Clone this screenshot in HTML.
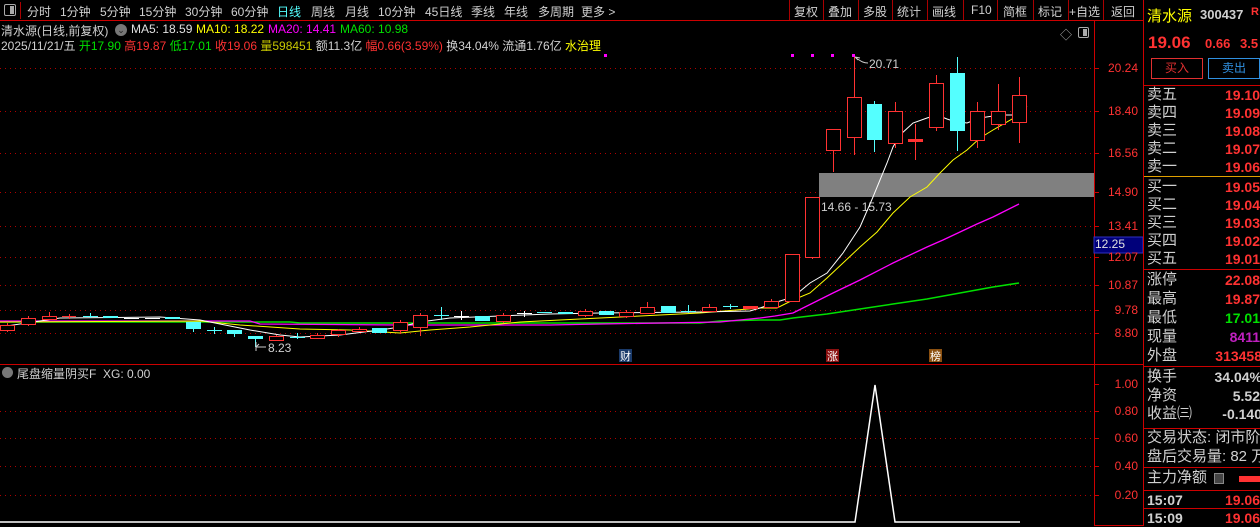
<!DOCTYPE html>
<html><head><meta charset="utf-8"><style>
*{margin:0;padding:0;box-sizing:border-box}
body{width:1260px;height:526px;background:#000;overflow:hidden;position:relative;font-family:"Liberation Sans","Noto Sans CJK SC",sans-serif;color:#c8c8c8}
.a{position:absolute;white-space:nowrap}
.tb{font-size:12px;top:3px;color:#d0d0d0}
.r{color:#ff3232}.g{color:#00e000}.y{color:#ffff00}.m{color:#ff00ff}.w{color:#e0e0e0}.c{color:#54ffff}
.lbl{font-size:15px;color:#d0d0d0;left:1147px;line-height:18px}
.val{font-size:14px;font-weight:bold;right:0;line-height:18px;text-align:right}
</style></head><body>
<!-- toolbar -->
<div class="a" style="left:4px;top:4px;width:12px;height:12px;border:1px solid #aaa;border-radius:2px"><div style="position:absolute;right:1px;top:1px;width:4px;height:8px;background:#aaa"></div></div>
<div class="a" style="left:20px;top:2px;width:1px;height:17px;background:#a00"></div>
<div class="a tb" style="left:27px">分时</div>
<div class="a tb" style="left:60px">1分钟</div>
<div class="a tb" style="left:100px">5分钟</div>
<div class="a tb" style="left:139px">15分钟</div>
<div class="a tb" style="left:185px">30分钟</div>
<div class="a tb" style="left:231px">60分钟</div>
<div class="a tb c" style="left:277px">日线</div>
<div class="a tb" style="left:311px">周线</div>
<div class="a tb" style="left:345px">月线</div>
<div class="a tb" style="left:378px">10分钟</div>
<div class="a tb" style="left:425px">45日线</div>
<div class="a tb" style="left:471px">季线</div>
<div class="a tb" style="left:504px">年线</div>
<div class="a tb" style="left:538px">多周期</div>
<div class="a tb" style="left:581px">更多 &gt;</div>
<div class="a tb" style="left:794px">复权</div>
<div class="a tb" style="left:828px">叠加</div>
<div class="a tb" style="left:863px">多股</div>
<div class="a tb" style="left:897px">统计</div>
<div class="a tb" style="left:932px">画线</div>
<div class="a tb" style="left:971px">F10</div>
<div class="a tb" style="left:1003px">简框</div>
<div class="a tb" style="left:1038px">标记</div>
<div class="a tb" style="left:1069px">+自选</div>
<div class="a tb" style="left:1111px">返回</div>
<div class="a" style="left:789px;top:0;width:1px;height:20px;background:#a00"></div>
<div class="a" style="left:823px;top:0;width:1px;height:20px;background:#a00"></div>
<div class="a" style="left:858px;top:0;width:1px;height:20px;background:#a00"></div>
<div class="a" style="left:892px;top:0;width:1px;height:20px;background:#a00"></div>
<div class="a" style="left:927px;top:0;width:1px;height:20px;background:#a00"></div>
<div class="a" style="left:963px;top:0;width:1px;height:20px;background:#a00"></div>
<div class="a" style="left:997px;top:0;width:1px;height:20px;background:#a00"></div>
<div class="a" style="left:1033px;top:0;width:1px;height:20px;background:#a00"></div>
<div class="a" style="left:1068px;top:0;width:1px;height:20px;background:#a00"></div>
<div class="a" style="left:1103px;top:0;width:1px;height:20px;background:#a00"></div>
<div class="a" style="left:0;top:20px;width:1143px;height:1px;background:#c00"></div>
<div class="a" style="left:1143px;top:0;width:1px;height:526px;background:#c00"></div>
<div class="a" style="left:1094px;top:20px;width:1px;height:506px;background:#c00"></div>
<!-- info rows -->
<div class="a" style="left:1px;top:22px;font-size:12px;color:#d0d0d0">清水源(日线,前复权)</div>
<div class="a" style="left:115px;top:24px;width:12px;height:12px;border-radius:50%;background:#777;color:#222;font-size:9px;text-align:center;line-height:12px">⌄</div>
<div class="a w" style="left:131px;top:22px;font-size:12px">MA5: 18.59</div>
<div class="a y" style="left:196px;top:22px;font-size:12px">MA10: 18.22</div>
<div class="a m" style="left:268px;top:22px;font-size:12px">MA20: 14.41</div>
<div class="a g" style="left:340px;top:22px;font-size:12px">MA60: 10.98</div>
<div class="a" style="left:1px;top:37px;font-size:12px;color:#d0d0d0">2025/11/21/五 <span class="g">开17.90</span> <span class="r">高19.87</span> <span class="g">低17.01</span> <span class="r">收19.06</span> <span style="color:#c8c800">量598451</span> 额11.3亿 <span class="r">幅0.66(3.59%)</span> 换34.04% 流通1.76亿 <span class="y">水治理</span></div>
<div class="a" style="left:1060px;top:26px;font-size:12px;color:#aaa">◇</div>
<div class="a" style="left:1078px;top:27px;width:11px;height:11px;border:1px solid #aaa;border-radius:2px"><div style="position:absolute;right:1px;top:1px;width:4px;height:7px;background:#aaa"></div></div>
<!-- chart svg -->
<svg class="a" style="left:0;top:0" width="1143" height="526">
<g stroke="#b00000" stroke-dasharray="1,4" stroke-width="1">
<line x1="0" x2="1094" y1="68.5" y2="68.5"/><line x1="0" x2="1094" y1="111.5" y2="111.5"/><line x1="0" x2="1094" y1="153.5" y2="153.5"/><line x1="0" x2="1094" y1="192.5" y2="192.5"/><line x1="0" x2="1094" y1="226.5" y2="226.5"/><line x1="0" x2="1094" y1="257.5" y2="257.5"/><line x1="0" x2="1094" y1="285.5" y2="285.5"/><line x1="0" x2="1094" y1="310.5" y2="310.5"/><line x1="0" x2="1094" y1="333.5" y2="333.5"/>
<line x1="0" x2="1094" y1="411.5" y2="411.5"/><line x1="0" x2="1094" y1="438.5" y2="438.5"/><line x1="0" x2="1094" y1="466.5" y2="466.5"/><line x1="0" x2="1094" y1="495.5" y2="495.5"/>
</g>
<g stroke="#c00" stroke-width="1">
<line x1="1094" x2="1099" y1="68.5" y2="68.5"/><line x1="1094" x2="1099" y1="111.5" y2="111.5"/><line x1="1094" x2="1099" y1="153.5" y2="153.5"/><line x1="1094" x2="1099" y1="192.5" y2="192.5"/><line x1="1094" x2="1099" y1="226.5" y2="226.5"/><line x1="1094" x2="1099" y1="257.5" y2="257.5"/><line x1="1094" x2="1099" y1="285.5" y2="285.5"/><line x1="1094" x2="1099" y1="310.5" y2="310.5"/><line x1="1094" x2="1099" y1="333.5" y2="333.5"/>
<line x1="1094" x2="1099" y1="384.5" y2="384.5"/><line x1="1094" x2="1099" y1="411.5" y2="411.5"/><line x1="1094" x2="1099" y1="438.5" y2="438.5"/><line x1="1094" x2="1099" y1="466.5" y2="466.5"/><line x1="1094" x2="1099" y1="495.5" y2="495.5"/>
</g>
<rect x="819" y="173" width="275" height="24" fill="#808080"/>
<text x="821" y="211" font-size="12" fill="#d0d0d0" font-family="Liberation Sans">14.66 - 15.73</text>
<!-- MA lines -->
<polyline fill="none" stroke="#00e000" stroke-width="1.5" points="0,322 290,322 300,323 700,323 720,321 760,320 780,320 793,318 827,314 860,309 893,304 927,299 960,293 993,287 1019,283"/>
<polyline fill="none" stroke="#ff00ff" stroke-width="1.3" points="0,321 250,321 260,324 400,325 550,325 600,324 720,322 760,318 775,316 793,313 813,303 833,293 860,280 893,263 927,247 943,240 977,224 993,217 1019,204"/>
<polyline fill="none" stroke="#ffff00" stroke-width="1" points="0,322 200,321 240,325 300,329 350,330 400,333 430,330 470,327 520,322 600,318 700,313 760,308 777,308 793,300 810,293 827,278 843,263 860,247 877,232 893,213 910,197 927,187 940,173 953,160 967,150 980,138 993,130 1019,115"/>
<polyline fill="none" stroke="#ffffff" stroke-width="1" points="0,327 60,318 160,317 200,320 250,330 280,335 300,337 340,335 380,330 400,327 420,322 450,318 500,316 550,314 600,313 700,312 750,311 760,308 780,301 793,297 810,283 827,273 843,253 860,227 873,197 887,163 893,147 900,135 913,123 927,118 937,115 947,119 953,121 967,123 980,118 993,116 1000,115 1016,115 1019,112 1027,106"/>
<!-- candles -->
<g stroke="#ff3232" stroke-width="1" fill="#000">
<line x1="7.5" x2="7.5" y1="323" y2="332"/><rect x="0.5" y="325.5" width="14" height="5"/>
<line x1="28.5" x2="28.5" y1="316" y2="326"/><rect x="21.5" y="318.5" width="14" height="6"/>
<line x1="49.5" x2="49.5" y1="312" y2="319"/><rect x="42.5" y="316.5" width="14" height="3"/>
<line x1="62" x2="76" y1="316.5" y2="316.5"/><line x1="69.5" x2="69.5" y1="314" y2="319"/>
<line x1="276.5" x2="276.5" y1="335" y2="341"/><rect x="269.5" y="336.5" width="14" height="4"/>
<line x1="317.5" x2="317.5" y1="333" y2="339"/><rect x="310.5" y="335.5" width="14" height="3"/>
<line x1="338.5" x2="338.5" y1="329" y2="337"/><rect x="331.5" y="330.5" width="14" height="4"/>
<line x1="359.5" x2="359.5" y1="327" y2="332"/><rect x="352.5" y="329.5" width="14" height="2"/>
<line x1="400.5" x2="400.5" y1="320" y2="334"/><rect x="393.5" y="322.5" width="14" height="8"/>
<line x1="420.5" x2="420.5" y1="313" y2="336"/><rect x="413.5" y="315.5" width="14" height="12"/>
<line x1="503.5" x2="503.5" y1="313" y2="323"/><rect x="496.5" y="315.5" width="14" height="6"/>
<line x1="585.5" x2="585.5" y1="309" y2="317"/><rect x="578.5" y="311.5" width="14" height="4"/>
<line x1="626.5" x2="626.5" y1="310" y2="318"/><rect x="619.5" y="312.5" width="14" height="4"/>
<line x1="647.5" x2="647.5" y1="302" y2="314"/><rect x="640.5" y="307.5" width="14" height="6"/>
<line x1="709.5" x2="709.5" y1="304" y2="312"/><rect x="702.5" y="307.5" width="14" height="4"/>
<line x1="771.5" x2="771.5" y1="299" y2="308"/><rect x="764.5" y="301.5" width="14" height="6"/>
<rect x="785.5" y="254.5" width="14" height="47"/>
<line x1="812.5" x2="812.5" y1="257" y2="259"/><rect x="805.5" y="197.5" width="14" height="60"/>
<line x1="833.5" x2="833.5" y1="150" y2="172"/><rect x="826.5" y="129.5" width="14" height="21"/>
<line x1="854.5" x2="854.5" y1="57" y2="155"/><rect x="847.5" y="97.5" width="14" height="40"/>
<line x1="895.5" x2="895.5" y1="102" y2="148"/><rect x="888.5" y="111.5" width="14" height="32"/>
<line x1="915.5" x2="915.5" y1="124" y2="160"/>
<line x1="936.5" x2="936.5" y1="75" y2="131"/><rect x="929.5" y="83.5" width="14" height="44"/>
<line x1="977.5" x2="977.5" y1="102" y2="148"/><rect x="970.5" y="111.5" width="14" height="29"/>
<line x1="998.5" x2="998.5" y1="84" y2="130"/><rect x="991.5" y="111.5" width="14" height="13"/>
<line x1="1019.5" x2="1019.5" y1="77" y2="143"/><rect x="1012.5" y="95.5" width="14" height="27"/>
</g>
<rect x="908" y="139" width="15" height="3" fill="#ff3232"/>
<rect x="743" y="306" width="15" height="3" fill="#ff3232"/>
<g fill="#54ffff" stroke="#54ffff" stroke-width="1">
<line x1="83" x2="98" y1="316.5" y2="316.5"/><line x1="90.5" x2="90.5" y1="313" y2="318"/>
<rect x="103" y="316" width="15" height="2" stroke="none"/>
<rect x="165" y="317" width="15" height="2" stroke="none"/>
<line x1="193.5" x2="193.5" y1="322" y2="332"/><rect x="186" y="322" width="15" height="7" stroke="none"/>
<line x1="207" x2="222" y1="330.5" y2="330.5"/><line x1="214.5" x2="214.5" y1="327" y2="334"/>
<line x1="234.5" x2="234.5" y1="330" y2="337"/><rect x="227" y="330" width="15" height="4" stroke="none"/>
<line x1="255.5" x2="255.5" y1="336" y2="347"/><rect x="248" y="336" width="15" height="3" stroke="none"/>
<line x1="290" x2="305" y1="337.5" y2="337.5"/><line x1="297.5" x2="297.5" y1="333" y2="339"/>
<rect x="372" y="328" width="15" height="5" stroke="none"/>
<line x1="434" x2="449" y1="315.5" y2="315.5"/><line x1="441.5" x2="441.5" y1="307" y2="320"/>
<rect x="475" y="316" width="15" height="5" stroke="none"/>
<line x1="537" x2="552" y1="312.5" y2="312.5"/>
<rect x="558" y="312" width="15" height="2" stroke="none"/>
<rect x="599" y="311" width="15" height="4" stroke="none"/>
<rect x="661" y="306" width="15" height="7" stroke="none"/>
<line x1="681" x2="696" y1="311.5" y2="311.5"/><line x1="688.5" x2="688.5" y1="305" y2="313"/>
<line x1="723" x2="738" y1="306.5" y2="306.5"/><line x1="730.5" x2="730.5" y1="304" y2="309"/>
<line x1="874.5" x2="874.5" y1="101" y2="152"/><rect x="867" y="104" width="15" height="36" stroke="none"/>
<line x1="957.5" x2="957.5" y1="57" y2="151"/><rect x="950" y="73" width="15" height="58" stroke="none"/>
</g>
<g stroke="#fff" stroke-width="1">
<line x1="124" x2="139" y1="318.5" y2="318.5"/><line x1="145" x2="160" y1="318.5" y2="318.5"/>
<line x1="454" x2="469" y1="316.5" y2="316.5"/><line x1="461.5" x2="461.5" y1="311" y2="320"/>
<line x1="517" x2="532" y1="313.5" y2="313.5"/><line x1="524.5" x2="524.5" y1="311" y2="317"/>
</g>
<!-- markers -->
<g fill="#ff00ff"><rect x="604" y="54" width="3" height="3"/><rect x="791" y="54" width="3" height="3"/><rect x="811" y="54" width="3" height="3"/><rect x="831" y="54" width="3" height="3"/><rect x="852" y="54" width="3" height="3"/></g>
<path d="M855 57 L858 60 M855 57 L860 58 M856 58 C862 62 864 63 868 63" stroke="#ccc" fill="none"/>
<text x="869" y="68" font-size="12" fill="#d0d0d0" font-family="Liberation Sans">20.71</text>
<path d="M256 342 L256 351 M256 347 L266 347 M256 347 L259 344" stroke="#ccc" fill="none"/>
<text x="268" y="352" font-size="12" fill="#d0d0d0" font-family="Liberation Sans">8.23</text>
<rect x="619" y="349" width="13" height="13" fill="#1a3a6a"/>
<text x="620" y="360" font-size="11" fill="#fff" font-family="Noto Sans CJK SC">财</text>
<rect x="826" y="349" width="13" height="13" fill="#8b1010"/>
<text x="827" y="360" font-size="11" fill="#fff" font-family="Noto Sans CJK SC">涨</text>
<rect x="929" y="349" width="13" height="13" fill="#8b5010"/>
<text x="930" y="360" font-size="11" fill="#fff" font-family="Noto Sans CJK SC">榜</text>
<line x1="0" x2="1094" y1="364.5" y2="364.5" stroke="#c00"/>
<polyline fill="none" stroke="#fff" stroke-width="1.5" points="0,522 855,522 875,385 895,522 1020,522"/>
<rect x="1094.5" y="364.5" width="49" height="161" fill="none" stroke="#c00"/>
<rect x="1094" y="237" width="49" height="16" fill="#00007a" stroke="#3030c0"/>
</svg>
<!-- lower label -->
<div class="a" style="left:2px;top:367px;width:11px;height:11px;border-radius:50%;background:#777"></div>
<div class="a" style="left:17px;top:365px;font-size:12px;color:#d0d0d0">尾盘缩量阴买F&nbsp; XG: 0.00</div>
<!-- axis labels -->
<div class="a r" style="right:122px;top:61px;font-size:12px">20.24</div>
<div class="a r" style="right:122px;top:104px;font-size:12px">18.40</div>
<div class="a r" style="right:122px;top:146px;font-size:12px">16.56</div>
<div class="a r" style="right:122px;top:185px;font-size:12px">14.90</div>
<div class="a r" style="right:122px;top:219px;font-size:12px">13.41</div>
<div class="a r" style="right:122px;top:250px;font-size:12px">12.07</div>
<div class="a w" style="left:1095px;top:237px;font-size:12px">12.25</div>
<div class="a r" style="right:122px;top:278px;font-size:12px">10.87</div>
<div class="a r" style="right:122px;top:303px;font-size:12px">9.78</div>
<div class="a r" style="right:122px;top:326px;font-size:12px">8.80</div>
<div class="a r" style="right:122px;top:377px;font-size:12px">1.00</div>
<div class="a r" style="right:122px;top:404px;font-size:12px">0.80</div>
<div class="a r" style="right:122px;top:431px;font-size:12px">0.60</div>
<div class="a r" style="right:122px;top:459px;font-size:12px">0.40</div>
<div class="a r" style="right:122px;top:488px;font-size:12px">0.20</div>
<!-- right panel -->
<div class="a y" style="left:1147px;top:5px;font-size:15px">清水源</div>
<div class="a" style="left:1200px;top:7px;font-size:13px;font-weight:bold;color:#d0d0d0">300437</div>
<div class="a r" style="left:1251px;top:6px;font-size:11px;font-weight:bold">R</div>
<div class="a r" style="left:1148px;top:33px;font-size:17px;font-weight:bold">19.06</div>
<div class="a r" style="left:1205px;top:36px;font-size:13px;font-weight:bold">0.66</div>
<div class="a r" style="left:1240px;top:36px;font-size:13px;font-weight:bold">3.5</div>
<div class="a" style="left:1151px;top:58px;width:52px;height:21px;border:1px solid #e03030;color:#e03030;font-size:12px;text-align:center;line-height:19px">买入</div>
<div class="a" style="left:1208px;top:58px;width:52px;height:21px;border:1px solid #3090e0;color:#3090e0;font-size:12px;text-align:center;line-height:19px">卖出</div>
<div class="a" style="left:1144px;top:85px;width:116px;height:1px;background:#c00"></div>
<div class="a" style="left:1144px;top:176px;width:116px;height:1px;background:#e0a000"></div>
<div class="a" style="left:1144px;top:269px;width:116px;height:1px;background:#c00"></div>
<div class="a" style="left:1144px;top:366px;width:116px;height:1px;background:#c00"></div>
<div class="a" style="left:1144px;top:428px;width:116px;height:1px;background:#c00"></div>
<div class="a" style="left:1144px;top:467px;width:116px;height:1px;background:#c00"></div>
<div class="a" style="left:1144px;top:490px;width:116px;height:1px;background:#c00"></div>
<div class="a" style="left:1144px;top:508px;width:116px;height:1px;background:#c00"></div>
<div class="a lbl" style="top:86px">卖五</div><div class="a val r" style="top:86px">19.10</div>
<div class="a lbl" style="top:104px">卖四</div><div class="a val r" style="top:104px">19.09</div>
<div class="a lbl" style="top:122px">卖三</div><div class="a val r" style="top:122px">19.08</div>
<div class="a lbl" style="top:140px">卖二</div><div class="a val r" style="top:140px">19.07</div>
<div class="a lbl" style="top:158px">卖一</div><div class="a val r" style="top:158px">19.06</div>
<div class="a lbl" style="top:178px">买一</div><div class="a val r" style="top:178px">19.05</div>
<div class="a lbl" style="top:196px">买二</div><div class="a val r" style="top:196px">19.04</div>
<div class="a lbl" style="top:214px">买三</div><div class="a val r" style="top:214px">19.03</div>
<div class="a lbl" style="top:232px">买四</div><div class="a val r" style="top:232px">19.02</div>
<div class="a lbl" style="top:250px">买五</div><div class="a val r" style="top:250px">19.01</div>
<div class="a lbl" style="top:271px">涨停</div><div class="a val r" style="top:271px">22.08</div>
<div class="a lbl" style="top:290px">最高</div><div class="a val r" style="top:290px">19.87</div>
<div class="a lbl" style="top:309px">最低</div><div class="a val g" style="top:309px">17.01</div>
<div class="a lbl" style="top:328px">现量</div><div class="a val" style="top:328px;color:#c020c0">8411</div>
<div class="a lbl" style="top:347px">外盘</div><div class="a val r" style="top:347px;right:-2px">313458</div>
<div class="a lbl" style="top:368px">换手</div><div class="a val" style="top:368px;color:#d0d0d0;right:-2px">34.04%</div>
<div class="a lbl" style="top:387px">净资</div><div class="a val" style="top:387px;color:#d0d0d0">5.52</div>
<div class="a lbl" style="top:405px">收益㈢</div><div class="a val" style="top:405px;color:#d0d0d0;right:-2px">-0.140</div>
<div class="a lbl" style="top:429px">交易状态: 闭市阶</div>
<div class="a lbl" style="top:448px">盘后交易量: 82 万</div>
<div class="a lbl" style="top:469px">主力净额</div>
<div class="a" style="left:1214px;top:473px;width:10px;height:11px;border:1px solid #888;background:#444"></div>
<div class="a" style="left:1239px;top:476px;width:21px;height:6px;background:#ff3232"></div>
<div class="a" style="left:1147px;top:491px;font-size:14px;font-weight:bold;color:#d0d0d0;line-height:18px">15:07</div><div class="a val r" style="top:491px">19.06</div>
<div class="a" style="left:1147px;top:509px;font-size:14px;font-weight:bold;color:#d0d0d0;line-height:18px">15:09</div><div class="a val r" style="top:509px">19.06</div>
</body></html>
